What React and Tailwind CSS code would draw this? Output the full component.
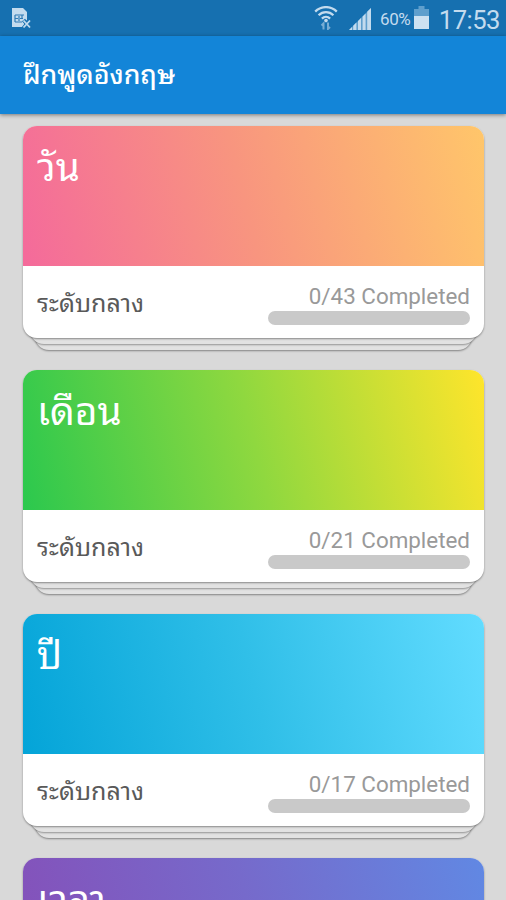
const THAI_FONT = "font-['Roboto','Noto_Sans_Thai_Looped','Noto_Sans',sans-serif]";

const lessons = [
  { id: 1, title: 'วัน', level: 'ระดับกลาง', done: 0, total: 43, gradient: 'bg-[linear-gradient(76deg,#f46a9b_0%,#f8957f_48%,#ffc66a_100%)]' },
  { id: 2, title: 'เดือน', level: 'ระดับกลาง', done: 0, total: 21, gradient: 'bg-[linear-gradient(76deg,#2bc84e_0%,#8fd83f_50%,#ffe52b_100%)]' },
  { id: 3, title: 'ปี', level: 'ระดับกลาง', done: 0, total: 17, gradient: 'bg-[linear-gradient(76deg,#04a4d8_0%,#30bfe8_50%,#62dcff_100%)]' },
  { id: 4, title: 'เวลา', gradient: 'bg-[linear-gradient(76deg,#8550b9_0%,#766acb_50%,#6188e3_100%)]' },
];

function SimIcon() {
  return (
    <svg className="h-[24px] w-[24px]" viewBox="0 0 22 24" fill="none">
      <path d="M1 1h11l4 4v8l-3 3v4H1z" fill="#c3dbee" />
      <path d="M4 8h9M4 15h7M4 8v7M8 9v5M4 11.5h3M11 8v4M9 11.5h3" stroke="#2f7bb5" strokeWidth="1.2" />
      <path d="M12.5 13l7 8M19.5 13l-7 8" stroke="#1871b0" strokeWidth="4" />
      <path d="M12.5 13.5l6.5 7M19 13.5l-6.5 7" stroke="#c3dbee" strokeWidth="1.8" />
    </svg>
  );
}

function WifiIcon() {
  return (
    <svg className="h-[24px] w-[24px]" viewBox="0 0 24 24" fill="none">
      <g stroke="#c3dbee" strokeWidth="2.3">
        <path d="M1.2 5.6C7.4-.4 16.6-.4 22.8 5.6" />
        <path d="M4.6 9.2c4.2-4.1 10.6-4.1 14.8 0" />
        <path d="M7.9 12.6c2.4-2.3 5.8-2.3 8.2 0" />
      </g>
      <circle cx="12" cy="14.6" r="1.8" fill="#c3dbee" />
      <path d="M9.5 23.5v-6l-2 2M14 16.5v6.5l2-2" stroke="#78add4" strokeWidth="2" />
    </svg>
  );
}

function SignalIcon() {
  return (
    <svg className="h-[24px] w-[24px]" viewBox="0 0 24 24">
      <path d="M1 23L23 1v22z" fill="#5f9fcd" />
      <path d="M1 23l3-3v3zM5.2 18.8l3.2-3.2V23H5.2zM10 14l3-3v12h-3zM14.6 9.4l3-3V23h-3zM19.2 4.8L23 1v22h-3.8z" fill="#c3dbee" />
    </svg>
  );
}

function BatteryIcon() {
  return (
    <svg className="h-[23px] w-[15px]" viewBox="0 0 15 23">
      <path d="M4.5 0h6v3H15v20H0V3h4.5z" fill="#5f9fcd" />
      <path d="M0 10h15v13H0z" fill="#cde1f1" />
    </svg>
  );
}

function StatusBar() {
  return (
    <div className="flex h-[36px] shrink-0 items-start bg-[#1670b0] pl-[10px] pr-[6px] text-[#c3dbee]">
      <div className="mt-[7px]"><SimIcon /></div>
      <div className="ml-auto flex items-start">
        <div className="mt-[6px]"><WifiIcon /></div>
        <div className="ml-[10px] mt-[7px]"><SignalIcon /></div>
        <span className="ml-[8px] mt-[9px] w-[31px] whitespace-nowrap text-[17px] leading-[20px] tracking-[-0.4px]">60%</span>
        <div className="ml-[3px] mt-[6px]"><BatteryIcon /></div>
        <span className="ml-[9px] mt-[5px] w-[62px] whitespace-nowrap text-right text-[25.6px] leading-[30px] tracking-[-0.5px]">17:53</span>
      </div>
    </div>
  );
}

function LessonCard({ lesson }) {
  return (
    <div className="h-[224.5px] shrink-0">
      <div className="relative z-20 h-[212.5px] overflow-hidden rounded-[14px] bg-white shadow-[0_1px_2px_rgba(0,0,0,0.4)]">
        <div className={`h-[140.5px] px-[14px] pt-[17.5px] ${lesson.gradient}`}>
          <h2 className="text-[38.8px] leading-[50px] text-white">{lesson.title}</h2>
        </div>
        {lesson.total && (
          <div className="flex h-[72px] justify-between px-[14px]">
            <span className="mt-[22px] text-[25px] leading-[32px] text-[#595959]">{lesson.level}</span>
            <div className="mt-[16px] flex w-[202px] flex-col">
              <span className="whitespace-nowrap text-right text-[22.4px] leading-[29px] text-[#999]">
                {lesson.done}/{lesson.total} Completed
              </span>
              <div className="h-[14px] overflow-hidden rounded-full bg-[#c9c9c9]">
                <div className="h-full bg-[#1385d8]" style={{ width: `${(lesson.done / lesson.total) * 100}%` }} />
              </div>
            </div>
          </div>
        )}
      </div>
      {/* pages stacked under the card */}
      <div className="relative z-10 mx-[7px] -mt-[24px] h-[30px] rounded-[14px] bg-[#e2e2e2] shadow-[0_1px_2px_rgba(0,0,0,0.35)]" />
      <div className="relative mx-[12px] -mt-[24px] h-[30px] rounded-[14px] bg-[#e2e2e2] shadow-[0_1px_2px_rgba(0,0,0,0.4)]" />
    </div>
  );
}

export default function App() {
  return (
    <div className={`flex h-[900px] w-[506px] flex-col overflow-hidden bg-[#d9d9d9] ${THAI_FONT}`}>
      <StatusBar />
      <header className="relative z-30 flex h-[78px] shrink-0 items-center bg-[#1385d8] px-[23px] shadow-[0_1px_4px_rgba(0,0,0,0.45)]">
        <h1 className="text-[26.7px] font-medium leading-[36px] text-white">ฝึกพูดอังกฤษ</h1>
      </header>
      <main className="flex min-h-0 flex-1 flex-col gap-[19.6px] overflow-hidden pl-[23px] pr-[22px] pt-[11.7px]">
        {lessons.map((lesson) => (
          <LessonCard key={lesson.id} lesson={lesson} />
        ))}
      </main>
    </div>
  );
}
